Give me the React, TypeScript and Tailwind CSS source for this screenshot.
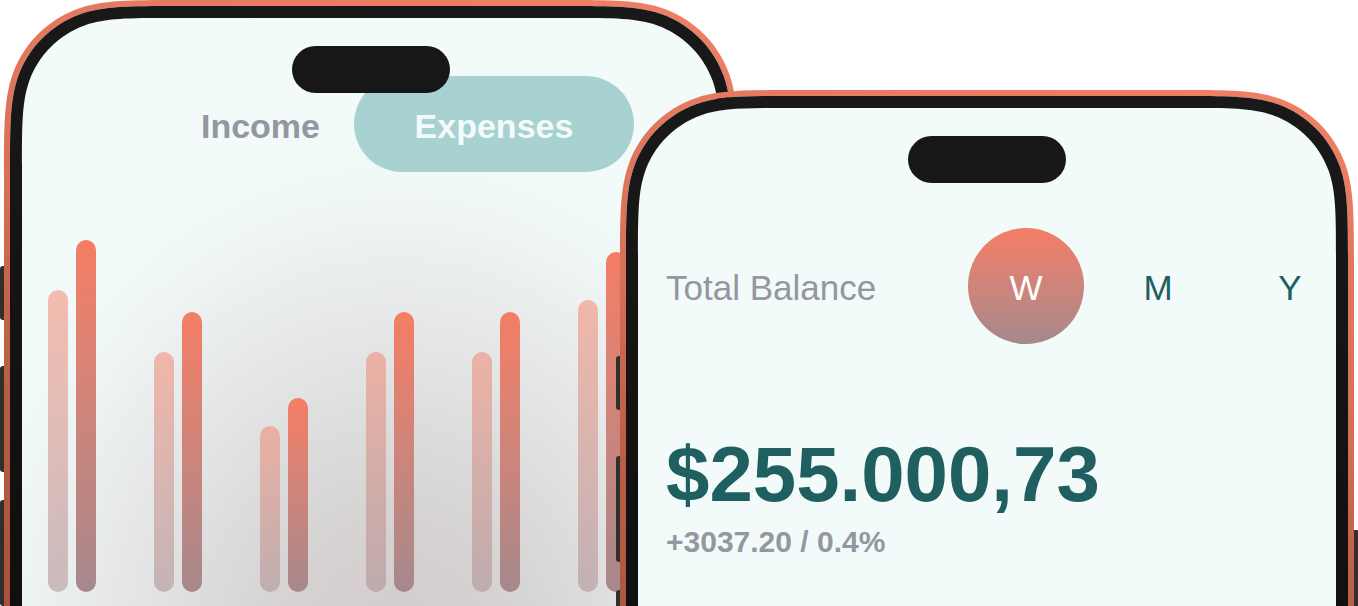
import { useState } from "react";
import type { ReactNode } from "react";

const DEVICE_WIDTH = 734;
const DEVICE_HEIGHT = 1560;

// Rounded rectangle with continuous-curvature corners, inset from the device edge.
function contour(inset: number, r: number): string {
  const x0 = inset;
  const y0 = inset;
  const x1 = DEVICE_WIDTH - inset;
  const y1 = DEVICE_HEIGHT;
  const a = 1.5 * r;
  const b = 1.08 * r;
  const c = 0.84 * r;
  const d = 0.6315 * r;
  const e = 0.0749 * r;
  const f = 0.3728 * r;
  const g = 0.1691 * r;
  return [
    `M${x0} ${y1}V${y0 + a}`,
    `C${x0} ${y0 + b} ${x0} ${y0 + c} ${x0 + e} ${y0 + d}`,
    `C${x0 + g} ${y0 + f} ${x0 + f} ${y0 + g} ${x0 + d} ${y0 + e}`,
    `C${x0 + c} ${y0} ${x0 + b} ${y0} ${x0 + a} ${y0}`,
    `H${x1 - a}`,
    `C${x1 - b} ${y0} ${x1 - c} ${y0} ${x1 - d} ${y0 + e}`,
    `C${x1 - f} ${y0 + g} ${x1 - g} ${y0 + f} ${x1 - e} ${y0 + d}`,
    `C${x1} ${y0 + c} ${x1} ${y0 + b} ${x1} ${y0 + a}`,
    `V${y1}Z`,
  ].join("");
}

const OUTER = contour(0, 117);
const BEZEL = contour(6, 111);
const SCREEN = contour(18, 99);

function DeviceFrame({ id }: { id: string }) {
  return (
    <svg
      aria-hidden="true"
      className="pointer-events-none absolute inset-x-0 top-0 h-[1560px] w-full overflow-visible"
      viewBox={`0 0 ${DEVICE_WIDTH} ${DEVICE_HEIGHT}`}
      preserveAspectRatio="none"
    >
      <defs>
        <linearGradient id={`${id}-rim`} gradientUnits="userSpaceOnUse" x1="734" y1="0" x2="587" y2="720">
          <stop offset="0" stopColor="#f08066" />
          <stop offset="0.2" stopColor="#e4795f" />
          <stop offset="0.46" stopColor="#d57058" />
          <stop offset="0.6" stopColor="#c5624a" />
          <stop offset="0.73" stopColor="#b95c45" />
          <stop offset="1" stopColor="#a8513c" />
        </linearGradient>
        <linearGradient id={`${id}-bezel`} gradientUnits="userSpaceOnUse" x1="0" y1="0" x2="0" y2="600">
          <stop offset="0" stopColor="#191919" />
          <stop offset="1" stopColor="#0f0f0f" />
        </linearGradient>
      </defs>
      <g fill="#2f302a">
        <rect x="-4" y="266" width="8" height="54" rx="3" />
        <rect x="-4" y="366" width="8" height="106" rx="3" />
        <rect x="-4" y="500" width="8" height="106" rx="3" />
        <rect x="730" y="440" width="8" height="170" rx="1" />
      </g>
      <path d={OUTER + BEZEL} fillRule="evenodd" fill={`url(#${id}-rim)`} />
      <path d={BEZEL + SCREEN} fillRule="evenodd" fill={`url(#${id}-bezel)`} />
    </svg>
  );
}

function Phone({ id, className, screen, children }: { id: string; className: string; screen: string; children: ReactNode }) {
  return (
    <section className={`relative min-w-0 flex-1 basis-0 ${className}`}>
      <div className={`absolute inset-x-3 top-3 h-[1540px] rounded-t-[108px] ${screen}`} />
      <div className="relative">{children}</div>
      <DeviceFrame id={id} />
      <div className="absolute top-[46px] left-1/2 h-[47px] w-[158px] -translate-x-1/2 rounded-full bg-[#171717]" />
    </section>
  );
}

const FLOWS = [
  { income: 302, expenses: 352 },
  { income: 240, expenses: 280 },
  { income: 166, expenses: 194 },
  { income: 240, expenses: 280 },
  { income: 240, expenses: 280 },
  { income: 292, expenses: 340 },
];

function FlowChart() {
  return (
    <div role="img" aria-label="Income and expenses" className="mt-[68px] flex h-[352px] items-end gap-[58px] overflow-hidden pl-11">
      {FLOWS.map((flow, i) => (
        <div key={i} className="flex shrink-0 items-end gap-2">
          <div className="w-5 rounded-full bg-linear-to-b from-[#f47d64] to-[#a6888c] opacity-50" style={{ height: flow.income }} />
          <div className="w-5 rounded-full bg-linear-to-b from-[#f47d64] to-[#a6888c]" style={{ height: flow.expenses }} />
        </div>
      ))}
    </div>
  );
}

function StatsScreen() {
  const [tab, setTab] = useState("Expenses");
  return (
    <div className="pt-[76px]">
      <div className="flex items-center justify-end gap-[34px] pr-[104px] text-[34px] font-bold">
        {["Income", "Expenses"].map((name) => (
          <button
            key={name}
            type="button"
            aria-pressed={tab === name}
            onClick={() => setTab(name)}
            className={`h-24 rounded-full pt-1 ${tab === name ? "w-[280px] bg-[#a8d1d1] text-[#f2fafa]" : "text-[#9397a0]"}`}
          >
            {name}
          </button>
        ))}
      </div>
      <FlowChart />
    </div>
  );
}

function BalanceScreen() {
  const [period, setPeriod] = useState("W");
  return (
    <div className="pt-[138px]">
      <div className="flex items-center justify-between pr-1.5 pl-[46px] text-[35px]">
        <h2 className="pt-1 whitespace-nowrap text-[#9397a0]">Total Balance</h2>
        <div className="flex shrink-0 gap-4">
          {["W", "M", "Y"].map((name) => (
            <button
              key={name}
              type="button"
              aria-pressed={period === name}
              onClick={() => setPeriod(name)}
              className={`size-[116px] rounded-full pt-1 ${period === name ? "bg-linear-to-b from-[#f47d64] to-[#a6888c] text-white" : "text-[#1f5f60]"}`}
            >
              {name}
            </button>
          ))}
        </div>
      </div>
      <div className="mt-[86px] pl-[46px] font-bold">
        <p className="text-[78px] leading-[88px] text-[#1f5f60]">$255.000,73</p>
        <p className="mt-1 text-[30px] leading-10 text-[#9397a0]">+3037.20 / 0.4%</p>
      </div>
    </div>
  );
}

export default function App() {
  return (
    <main className="flex h-screen overflow-hidden bg-white px-1 font-['Liberation_Sans',Arial,sans-serif]">
      <Phone
        id="stats"
        className=""
        screen="bg-[#f2fbfa] bg-[radial-gradient(ellipse_460px_540px_at_380px_650px,#d3c9c9_0%,#d7d4d4_30%,#e0e0e0_50%,#ebeeef_74%,#f0f7f7_88%,#f2fbfa_100%)]"
      >
        <StatsScreen />
      </Phone>
      <Phone id="balance" className="-ml-[118px] mt-[90px]" screen="bg-[#f2fbfa]">
        <BalanceScreen />
      </Phone>
    </main>
  );
}
